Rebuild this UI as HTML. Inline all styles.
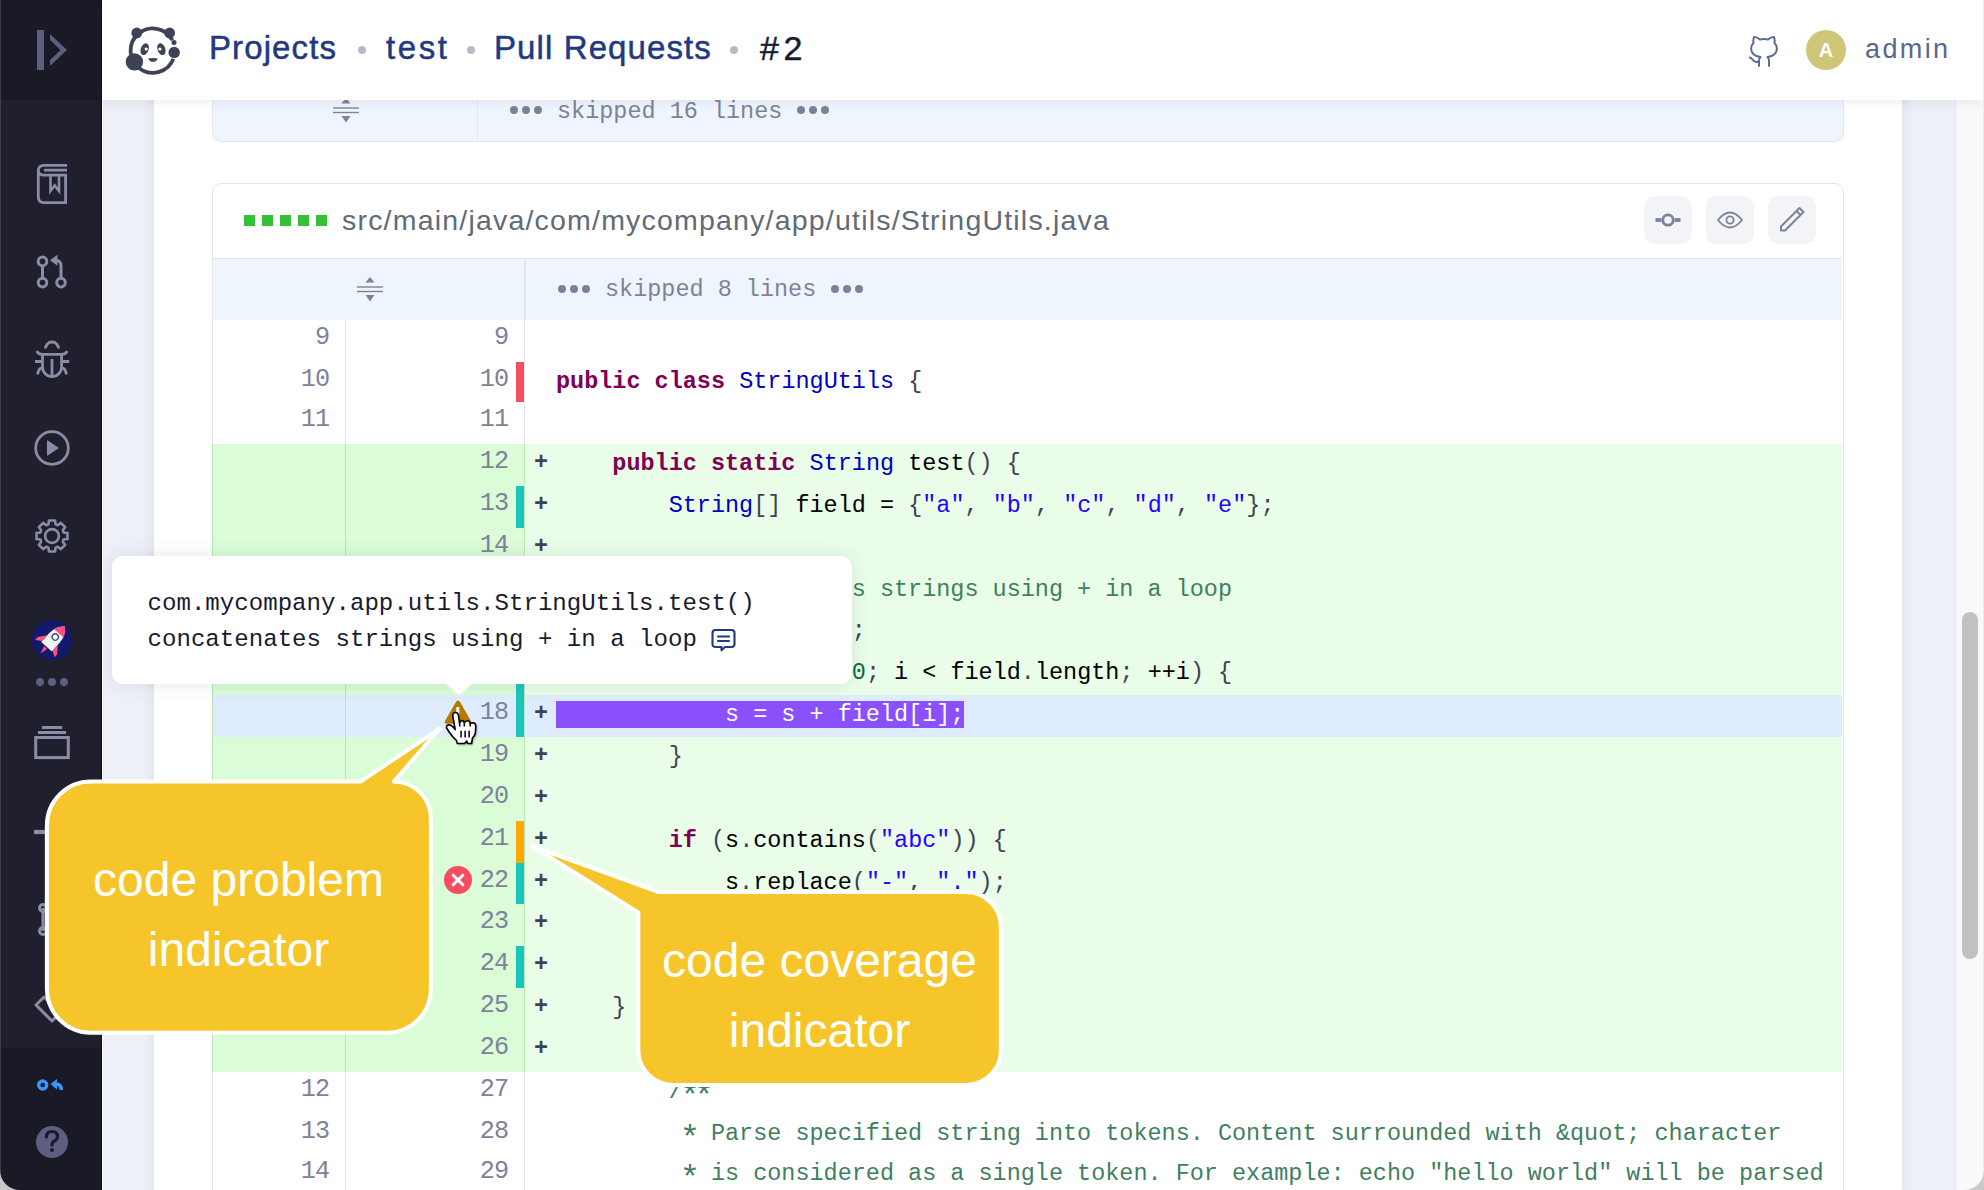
<!DOCTYPE html>
<html><head><meta charset="utf-8">
<style>
*{box-sizing:border-box;margin:0;padding:0}
html,body{width:1984px;height:1190px;overflow:hidden;background:#eef0f8;font-family:"Liberation Sans",sans-serif}
.abs{position:absolute}
#side{left:0;top:0;width:101px;height:1190px;background:#1f1f2d}
#sideTop{left:0;top:0;width:101px;height:100px;background:#1a1a27}
#sideBot{left:0;top:1048px;width:101px;height:142px;background:#1a1a27}
#sideLine{left:101px;top:0;width:1px;height:1190px;background:#0d0d18}
#sideWhite{left:102px;top:0;width:1px;height:1190px;background:#fff}
#card{left:154px;top:0;width:1748px;height:1190px;background:#fff;box-shadow:0 0 12px rgba(60,60,100,.12)}
#hdr{left:102px;top:0;width:1882px;height:100px;background:#fff;box-shadow:0 2px 10px rgba(60,70,110,.10);z-index:5}
#sb{left:1955px;top:100px;width:29px;height:1090px;background:#f9f9f9;border-left:1px solid #e8e8e8}
#thumb{left:1962px;top:612px;width:16px;height:347px;background:#c1c1c1;border-radius:8px}
.mono{font-family:"Liberation Mono",monospace;font-size:23.48px;white-space:pre}
.crumb{font-size:33px;color:#1f3a80;letter-spacing:1.1px;-webkit-text-stroke:0.5px #1f3a80;top:28px;line-height:40px}
.dot{width:8px;height:8px;border-radius:50%;background:#b9b9c9;top:46px}

.row{position:absolute;left:213px;width:1629px}
.rctx{background:#fff}
.radd{background:#e9fde8}
.rhl{background:#deecfd}
.radd::before,.rhl::before{content:"";position:absolute;left:-1.5px;top:0;width:1.5px;height:100%;background:#b9e3b9}
.lno{position:absolute;top:0;height:100%;font-family:"Liberation Mono",monospace;font-size:25.2px;letter-spacing:-1px;color:#7e8299;text-align:right;line-height:36px}
.lno.old{left:0;width:132px;padding-right:16px}
.lno.new{left:132px;width:179px;padding-right:16px;border-left:1px solid #e4e6ef}
.radd .lno,.rhl .lno{}
.radd .lno{background:#dafcd6;border-color:#b9e3b9}
.rhl .lno{border-color:#b9e3b9}
.bar{position:absolute;left:303px;top:0;width:8px;height:100%}
.bar.red{background:#f64e60}.bar.teal{background:#1bc5bd}.bar.orange{background:#ffa800}
.code{position:absolute;left:311px;top:0;height:100%;right:0;padding-left:31px;line-height:39px;color:#000;border-left:1px solid #e4e6ef}
.radd .code{border-color:#b9e3b9}
.rhl .code{border-color:#b9e3b9}
.code{text-indent:0}
.plus{position:absolute;left:321px;width:14px;top:0;font-family:"Liberation Mono",monospace;font-size:23.48px;font-weight:bold;color:#3f4254;line-height:37.5px;z-index:2}
.kw{color:#7f0055;font-weight:bold}.ty{color:#0000c0}.st{color:#2a00ff}.pu{color:#3f4254}.cm{color:#3f7f5f}.nu{color:#164}
.sel{background:#8950fc;color:#fff}
.ast{display:inline-block;transform:translateY(5.5px) scale(1.45)}

.box{position:absolute;border:1.5px solid #e4e6ef;background:#fff}
.skip{position:absolute;background:#eef5fd}
.dots3{position:absolute;width:8px;height:8px;border-radius:50%;background:#7e8299;box-shadow:12px 0 0 #7e8299,24px 0 0 #7e8299}
.skiptxt{position:absolute;font-family:"Liberation Mono",monospace;font-size:23.48px;color:#7e8299;white-space:pre;line-height:30px}
.hbtn{position:absolute;top:196px;width:48px;height:48px;border-radius:10px;background:#f3f4f8}
.gsq{position:absolute;top:215px;width:11px;height:11px;background:#35c134}

.callt{font-size:48px;line-height:70px;color:#fff;text-align:center;z-index:21;white-space:nowrap}
</style></head><body>
<div id="side" class="abs"></div>
<div id="sideTop" class="abs"></div>
<div id="sideBot" class="abs"></div>
<div id="sideLine" class="abs"></div>
<div id="sideWhite" class="abs"></div>
<div id="card" class="abs"></div>
<div id="sb" class="abs"></div>
<div id="thumb" class="abs"></div>


<!-- previous file box bottom -->
<div class="box" style="left:212px;top:60px;width:1632px;height:82px;border-radius:0 0 9px 9px;background:#eef5fd"></div>
<div class="abs" style="left:476.5px;top:60px;width:1.5px;height:80px;background:#e4e6ef"></div>
<svg class="abs" style="left:332px;top:96px" width="28" height="28" viewBox="0 0 28 28"><path d="M9.5 7.5 L14 2 L18.5 7.5Z M9.5 20 L14 26.5 L18.5 20Z" fill="#7e8299"/><rect x="1" y="11.3" width="26" height="1.4" fill="#7e8299"/><rect x="1" y="15.8" width="26" height="1.4" fill="#7e8299"/></svg>
<div class="dots3" style="left:510px;top:106px"></div>
<div class="skiptxt" style="left:557px;top:96.5px">skipped 16 lines</div>
<div class="dots3" style="left:797px;top:106px"></div>

<!-- file box -->
<div class="box" style="left:212px;top:182.5px;width:1632px;height:1100px;border-radius:9px 9px 0 0"></div>
<div class="abs" style="left:213px;top:257.5px;width:1629px;height:1.5px;background:#e4e6ef"></div>
<div class="gsq" style="left:244px"></div><div class="gsq" style="left:262px"></div><div class="gsq" style="left:280px"></div><div class="gsq" style="left:298px"></div><div class="gsq" style="left:316px"></div>
<div class="abs" style="left:342px;top:201.5px;font-size:28.5px;letter-spacing:1.2px;color:#626977;white-space:pre;line-height:36px">src/main/java/com/mycompany/app/utils/StringUtils.java</div>
<div class="hbtn" style="left:1644px"></div><div class="hbtn" style="left:1706px"></div><div class="hbtn" style="left:1768px"></div>
<svg class="abs" style="left:1644px;top:196px" width="48" height="48" viewBox="0 0 48 48"><circle cx="24" cy="24" r="5.2" fill="none" stroke="#7e8299" stroke-width="2.8"/><rect x="11.5" y="22.1" width="6" height="3.8" fill="#7e8299"/><rect x="30.5" y="22.1" width="6" height="3.8" fill="#7e8299"/></svg>
<svg class="abs" style="left:1706px;top:196px" width="48" height="48" viewBox="0 0 48 48"><path d="M12 24 Q24 9 36 24 Q24 39 12 24Z" fill="none" stroke="#7e8299" stroke-width="1.8"/><circle cx="24" cy="24" r="3.6" fill="none" stroke="#7e8299" stroke-width="1.8"/></svg>
<svg class="abs" style="left:1768px;top:196px" width="48" height="48" viewBox="0 0 48 48"><path d="M13 30.5 L31.5 12 L35.5 16 L17 34.5 L13 34.5Z M28.5 15 L32.5 19" fill="none" stroke="#7e8299" stroke-width="2" stroke-linejoin="round"/></svg>
<!-- skipped 8 -->
<div class="skip" style="left:213px;top:259px;width:1629px;height:61px"></div>
<div class="abs" style="left:524px;top:259px;width:1.5px;height:61px;background:#e4e6ef"></div>
<svg class="abs" style="left:356px;top:275px" width="28" height="28" viewBox="0 0 28 28"><path d="M9.5 7.5 L14 2 L18.5 7.5Z M9.5 20 L14 26.5 L18.5 20Z" fill="#7e8299"/><rect x="1" y="11.3" width="26" height="1.4" fill="#7e8299"/><rect x="1" y="15.8" width="26" height="1.4" fill="#7e8299"/></svg>
<div class="dots3" style="left:558px;top:285px"></div>
<div class="skiptxt" style="left:605px;top:274.5px">skipped 8 lines</div>
<div class="dots3" style="left:831px;top:285px"></div>

<svg class="abs" style="left:0;top:0;z-index:3" width="101" height="1190">
<g fill="#5e5e80"><rect x="37" y="30" width="7" height="40"/><path d="M50,34 L67,50 L50,66 L50,60 L60.5,50 L50,40Z"/></g>
<g fill="none" stroke="#8b8ca6" stroke-width="2.8">
 <path d="M67,165.4 H44 Q38.3,165.4 38.3,171 V197 Q38.3,202.6 44,202.6 H65.6 V175.1 H44 Q38.3,175.1 38.3,170.2 M44,170.2 H67"/>
 <path d="M50.5,175 V191 L54.7,185.5 L59,191 V175" stroke-width="2.6"/>
 <circle cx="42.5" cy="261.4" r="4.3" stroke-width="3"/><circle cx="42.5" cy="282.6" r="4.3" stroke-width="3"/><circle cx="61" cy="282.6" r="4.3" stroke-width="3"/>
 <path d="M42.5,265.7 V278.3 M61,278.3 V266 Q61,260.3 55,260.3" stroke-width="3"/><path d="M50,260.3 L57.5,254.8 V265.8Z" fill="#8b8ca6" stroke="none"/>
 <path d="M45.5,348.5 A6.5,6.5 0 0 1 58.5,348.5" stroke-width="2.8"/>
 <path d="M42.5,354.3 H61.6 V367 A9.55,9.55 0 0 1 42.5,367 Z M52,359 V375.5 M37,351 Q38,354.3 42.5,354.3 M67,351 Q66,354.3 61.6,354.3 M35,361.5 H42.5 M61.6,361.5 H69.2 M42.5,367 Q38,369 37.7,374.5 M61.6,367 Q66,369 66.3,374.5" stroke-width="2.8"/>
 <circle cx="52" cy="448" r="16.3" stroke-width="2.8"/>
 <circle cx="52" cy="536" r="6.9" stroke-width="2.6"/>
 <path d="M41.9,727.5 H62.2 M37.9,732.6 H66.1" stroke-width="3"/>
 <rect x="35.7" y="737.5" width="32.6" height="20.1" stroke-width="3"/>
 <path d="M34,832 H45" stroke-width="4.2"/>
 <path d="M43,908 V931" stroke-width="3"/><circle cx="43" cy="908" r="3.5" stroke-width="3"/><circle cx="43" cy="931" r="3.5" stroke-width="3"/>
 <path d="M36,1005 L44,997 L60,1013 L52,1021Z" stroke-width="3" stroke-linejoin="round"/>
</g>
<path d="M48.43,524.33 L48.99,520.49 L55.01,520.49 L55.57,524.33 L57.73,525.23 L60.84,522.90 L65.10,527.16 L62.77,530.27 L63.67,532.43 L67.51,532.99 L67.51,539.01 L63.67,539.57 L62.77,541.73 L65.10,544.84 L60.84,549.10 L57.73,546.77 L55.57,547.67 L55.01,551.51 L48.99,551.51 L48.43,547.67 L46.27,546.77 L43.16,549.10 L38.90,544.84 L41.23,541.73 L40.33,539.57 L36.49,539.01 L36.49,532.99 L40.33,532.43 L41.23,530.27 L38.90,527.16 L43.16,522.90 L46.27,525.23Z" fill="none" stroke="#8b8ca6" stroke-width="2.6" stroke-linejoin="round"/><path d="M47,440 L59,448 L47,456Z" fill="#8b8ca6"/>
<circle cx="52" cy="640" r="20" fill="#121a6e"/>
<g transform="translate(53.5 639) rotate(42) scale(1.3)">
 <path d="M0,-13 Q5.5,-8 5.5,-1 V8 H-5.5 V-1 Q-5.5,-8 0,-13Z" fill="#f2f2f4"/>
 <path d="M0,-13 Q4,-10 4.8,-6 H-4.8 Q-4,-10 0,-13Z" fill="#ff4f7b"/>
 <path d="M-5.5,1 L-10,7 L-10,10 L-5.5,7Z M5.5,1 L10,7 L10,10 L5.5,7Z M-1.6,9 H1.6 L0,15Z" fill="#ff4f7b"/>
 <circle cx="0" cy="-2" r="2.4" fill="#fff" stroke="#3b3f8c" stroke-width="1"/>
</g>
<g fill="#5f5f80"><circle cx="40" cy="682" r="4"/><circle cx="52" cy="682" r="4"/><circle cx="64" cy="682" r="4"/></g>
<g fill="none" stroke="#3699ff"><circle cx="42.7" cy="1085" r="4" stroke-width="3.3"/></g>
<path d="M50.5,1084 L57,1079 V1082.5 Q63,1082.5 63,1090 H59.5 Q59.5,1086.5 57,1086 V1089.5Z" fill="#3699ff"/>
<circle cx="52" cy="1142" r="16" fill="#5e5e80"/>
<path d="M46.5,1137 Q46.5,1131.5 52,1131.5 Q57.5,1131.5 57.5,1136.5 Q57.5,1139.5 54.5,1141 Q52,1142.3 52,1145" fill="none" stroke="#1b1a27" stroke-width="3.2" stroke-linecap="round"/>
<circle cx="52" cy="1150" r="2" fill="#1b1a27"/>
</svg>
<!-- logo -->
<svg class="abs" style="left:120px;top:20px;z-index:6" width="65" height="60" viewBox="120 20 65 60">
<g fill="#3f4254">
<path d="M172.4,40.2 A22.2,22.2 0 1 0 173.4,58.9" fill="none" stroke="#3f4254" stroke-width="3.8"/>
<circle cx="136.8" cy="33" r="5.4"/><circle cx="169.6" cy="33" r="5.4"/>
<circle cx="134.4" cy="61.9" r="8.7"/><circle cx="174.2" cy="52.5" r="5.7"/><circle cx="174" cy="42.4" r="2.5"/>
<ellipse cx="144.7" cy="49.2" rx="3.9" ry="6.1" transform="rotate(20 144.7 49.2)"/>
<ellipse cx="161.4" cy="49.2" rx="3.9" ry="6.1" transform="rotate(-20 161.4 49.2)"/>
<path d="M148.2,58.4 Q153,57.4 157.8,58.4 Q156.5,61.8 153,61.8 Q149.5,61.8 148.2,58.4Z"/>
</g>
<circle cx="146.2" cy="49" r="1.6" fill="#fff"/><circle cx="159.9" cy="49" r="1.6" fill="#fff"/>
</svg>
<!-- github -->
<svg class="abs" style="left:1745px;top:32px;z-index:6" width="38" height="38" viewBox="0 0 38 38"><path d="M14,34 V28.5 Q14,26.5 15.5,25 Q8,24 6.5,19 Q5.2,14.5 8.5,11 Q7.8,8 9,5 Q12,5 15,7.5 Q19,6.5 23,7.5 Q26,5 29,5 Q30.2,8 29.5,11 Q32.8,14.5 31.5,19 Q30,24 22.5,25 Q24,26.5 24,28.5 V34 M14,29.5 Q9.5,31 7.5,27.5 Q6.5,26 4.8,25.5" fill="none" stroke="#5e6b94" stroke-width="2" stroke-linecap="round" stroke-linejoin="round"/></svg>
<div class="row rctx" style="top:320.00px;height:42.00px">
<div class="lno old">9</div><div class="lno new">9</div>
<div class="code mono"></div>
</div>
<div class="row rctx" style="top:362.00px;height:40.00px">
<div class="lno old">10</div><div class="lno new">10</div>
<div class="bar red"></div>
<div class="code mono"><b class="kw">public</b> <b class="kw">class</b> <span class="ty">StringUtils</span> <span class="pu">{</span></div>
</div>
<div class="row rctx" style="top:402.00px;height:42.00px">
<div class="lno old">11</div><div class="lno new">11</div>
<div class="code mono"></div>
</div>
<div class="row radd" style="top:444.00px;height:41.86px">
<div class="lno old"></div><div class="lno new">12</div>
<div class="plus">+</div>
<div class="code mono">    <b class="kw">public</b> <b class="kw">static</b> <span class="ty">String</span> test<span class="pu">()</span> <span class="pu">{</span></div>
</div>
<div class="row radd" style="top:485.86px;height:41.86px">
<div class="lno old"></div><div class="lno new">13</div>
<div class="bar teal"></div>
<div class="plus">+</div>
<div class="code mono">        <span class="ty">String</span><span class="pu">[]</span> field = <span class="pu">{</span><span class="st">"a"</span><span class="pu">,</span> <span class="st">"b"</span><span class="pu">,</span> <span class="st">"c"</span><span class="pu">,</span> <span class="st">"d"</span><span class="pu">,</span> <span class="st">"e"</span><span class="pu">};</span></div>
</div>
<div class="row radd" style="top:527.72px;height:41.86px">
<div class="lno old"></div><div class="lno new">14</div>
<div class="plus">+</div>
<div class="code mono"></div>
</div>
<div class="row radd" style="top:569.58px;height:41.86px">
<div class="lno old"></div><div class="lno new">15</div>
<div class="plus">+</div>
<div class="code mono">        <span class="cm">//concatenates strings using + in a loop</span></div>
</div>
<div class="row radd" style="top:611.44px;height:41.86px">
<div class="lno old"></div><div class="lno new">16</div>
<div class="bar teal"></div>
<div class="plus">+</div>
<div class="code mono">        <span class="ty">String</span> s = <span class="st">""</span><span class="pu">;</span></div>
</div>
<div class="row radd" style="top:653.30px;height:41.86px">
<div class="lno old"></div><div class="lno new">17</div>
<div class="bar teal"></div>
<div class="plus">+</div>
<div class="code mono">        <b class="kw">for</b> <span class="pu">(</span><b class="kw">int</b> i = <span class="nu">0</span><span class="pu">;</span> i &lt; field<span class="pu">.</span>length<span class="pu">;</span> ++i<span class="pu">)</span> <span class="pu">{</span></div>
</div>
<div class="row rhl" style="top:695.16px;height:41.86px">
<div class="lno old"></div><div class="lno new">18</div>
<div class="bar teal"></div>
<div class="plus">+</div>
<div class="code mono"><span class="sel">            s = s + field[i];</span></div>
</div>
<div class="row radd" style="top:737.02px;height:41.86px">
<div class="lno old"></div><div class="lno new">19</div>
<div class="plus">+</div>
<div class="code mono">        <span class="pu">}</span></div>
</div>
<div class="row radd" style="top:778.88px;height:41.86px">
<div class="lno old"></div><div class="lno new">20</div>
<div class="plus">+</div>
<div class="code mono"></div>
</div>
<div class="row radd" style="top:820.74px;height:41.86px">
<div class="lno old"></div><div class="lno new">21</div>
<div class="bar orange"></div>
<div class="plus">+</div>
<div class="code mono">        <b class="kw">if</b> <span class="pu">(</span>s<span class="pu">.</span>contains<span class="pu">(</span><span class="st">"abc"</span><span class="pu">))</span> <span class="pu">{</span></div>
</div>
<div class="row radd" style="top:862.60px;height:41.86px">
<div class="lno old"></div><div class="lno new">22</div>
<div class="bar teal"></div>
<div class="plus">+</div>
<div class="code mono">            s<span class="pu">.</span>replace<span class="pu">(</span><span class="st">"-"</span><span class="pu">,</span> <span class="st">"."</span><span class="pu">);</span></div>
</div>
<div class="row radd" style="top:904.46px;height:41.86px">
<div class="lno old"></div><div class="lno new">23</div>
<div class="plus">+</div>
<div class="code mono">        <span class="pu">}</span></div>
</div>
<div class="row radd" style="top:946.32px;height:41.86px">
<div class="lno old"></div><div class="lno new">24</div>
<div class="bar teal"></div>
<div class="plus">+</div>
<div class="code mono">        <b class="kw">return</b> s<span class="pu">;</span></div>
</div>
<div class="row radd" style="top:988.18px;height:41.86px">
<div class="lno old"></div><div class="lno new">25</div>
<div class="plus">+</div>
<div class="code mono">    <span class="pu">}</span></div>
</div>
<div class="row radd" style="top:1030.04px;height:41.86px">
<div class="lno old"></div><div class="lno new">26</div>
<div class="plus">+</div>
<div class="code mono"></div>
</div>
<div class="row rctx" style="top:1071.90px;height:41.86px">
<div class="lno old">12</div><div class="lno new">27</div>
<div class="code mono">        <span class="cm">/<span class="ast">*</span><span class="ast">*</span></span></div>
</div>
<div class="row rctx" style="top:1113.76px;height:41.86px">
<div class="lno old">13</div><div class="lno new">28</div>
<div class="code mono">         <span class="cm"><span class="ast">*</span> Parse specified string into tokens. Content surrounded with &amp;quot; character</span></div>
</div>
<div class="row rctx" style="top:1153.70px;height:41.86px">
<div class="lno old">14</div><div class="lno new">29</div>
<div class="code mono">         <span class="cm"><span class="ast">*</span> is considered as a single token. For example: echo "hello world" will be parsed</span></div>
</div>


<!-- problem icons -->
<svg class="abs" style="left:0;top:0;z-index:4" width="1984" height="1190">
<path d="M457.9,700.5 Q459.2,700.5 460.2,702.3 L471,721 Q472,723.7 469.5,723.7 L446.5,723.7 Q443.8,723.7 445,721 L455.8,702.3 Q456.7,700.5 457.9,700.5Z" fill="#b87800"/>
<rect x="456.3" y="707" width="3" height="9" fill="#fff"/><rect x="456.3" y="718" width="3" height="3" fill="#fff"/>
<circle cx="458" cy="880" r="14" fill="#f64e60"/>
<path d="M453.2,875.2 L462.8,884.8 M462.8,875.2 L453.2,884.8" stroke="#fff" stroke-width="3" stroke-linecap="round"/>
</svg>
<svg class="abs" style="left:0;top:0;z-index:8" width="1984" height="1190">
<defs><filter id="csh" x="-50%" y="-50%" width="200%" height="200%"><feGaussianBlur stdDeviation="0.8"/></filter></defs>
<path d="M455.5,712.5 Q458.2,712.5 458.5,715.5 L459.5,723.2 Q460.5,720.6 462,720.6 Q464,720.6 464.3,723 Q465.3,720.8 467.6,720.8 Q469.6,720.8 470.2,723.6 Q471.3,722.8 473,722.8 Q475.8,723 475.8,726 L475.5,732.5 Q475,735.5 472.5,738 L471.6,743.5 L467.5,743.5 L466.8,741 L464.5,743.5 L457.3,743.5 L456.5,740.5 Q452,736.5 448.5,731 L446.6,728 Q446,725.4 448.6,724.9 Q451,724.6 453.5,727.5 L455.2,729.6 L452.8,716 Q452.6,712.5 455.5,712.5Z" fill="#000" opacity=".35" transform="translate(1,1.5)" filter="url(#csh)"/>
<path d="M455.5,712.5 Q458.2,712.5 458.5,715.5 L459.5,723.2 Q460.5,720.6 462,720.6 Q464,720.6 464.3,723 Q465.3,720.8 467.6,720.8 Q469.6,720.8 470.2,723.6 Q471.3,722.8 473,722.8 Q475.8,723 475.8,726 L475.5,732.5 Q475,735.5 472.5,738 L471.6,743.5 L467.5,743.5 L466.8,741 L464.5,743.5 L457.3,743.5 L456.5,740.5 Q452,736.5 448.5,731 L446.6,728 Q446,725.4 448.6,724.9 Q451,724.6 453.5,727.5 L455.2,729.6 L452.8,716 Q452.6,712.5 455.5,712.5Z" fill="#fff" stroke="#000" stroke-width="1.6" stroke-linejoin="round"/>
<path d="M461.1,730.8 V737.4 M465.1,730.8 V737.4 M469.1,730.8 V737.4 M459.5,723.5 L459.9,726.5 M464.3,723.2 V726.5 M470.2,723.8 V726.5" stroke="#000" stroke-width="1.5"/>
</svg>
<!-- tooltip -->
<div class="abs" style="left:112px;top:556px;width:740px;height:128px;background:#fff;border-radius:11px;box-shadow:0 0 18px rgba(60,70,110,.13);z-index:10"></div>
<svg class="abs" style="left:0;top:0;z-index:11" width="1984" height="1190"><path d="M444,682 L459,695.5 L474,682Z" fill="#fff"/></svg>
<div class="abs mono" style="left:147.5px;top:586px;font-size:24.1px;line-height:36px;color:#181c32;z-index:12">com.mycompany.app.utils.StringUtils.test()
concatenates strings using + in a loop</div>
<svg class="abs" style="left:710px;top:626px;z-index:12" width="28" height="28" viewBox="0 0 28 28"><path d="M4.5,4 H21.5 Q24.5,4 24.5,7 V18 Q24.5,21 21.5,21 H15 L11.5,24.3 L11.5,21 H5.5 Q2.5,21 2.5,18 V7 Q2.5,4 5.5,4Z" fill="none" stroke="#1f3a82" stroke-width="2.1" stroke-linejoin="round"/><path d="M8,10.5 H19 M8,15 H19" stroke="#1f3a82" stroke-width="2.1" stroke-linecap="round"/></svg>
<!-- callouts -->
<svg class="abs" style="left:0;top:0;z-index:20" width="1984" height="1190">
<path d="M90.9,781.5 L360.5,781.5 L440,728.5 L393.8,781.5 A37.10,37.10 0 0 1 430.9,818.60 L430.9,988.80 A44,44 0 0 1 386.90,1032.8 L90.90,1032.8 A44,44 0 0 1 46.9,988.80 L46.9,825.50 A44,44 0 0 1 90.90,781.5 Z" fill="#f6c52a" stroke="#fff" stroke-width="4.1" stroke-linejoin="round"/>
<path d="M658.7,892 L965.90,892 A35,35 0 0 1 1000.9,927 L1000.9,1050 A35,35 0 0 1 965.90,1085 L673.30,1085 A35,35 0 0 1 638.3,1050 L638.3,912.5 L532,846 Z" fill="#f6c52a" stroke="#fff" stroke-width="4.1" stroke-linejoin="round"/>
</svg>
<div class="abs callt" style="left:45px;width:387px;top:845px">code problem<br>indicator</div>
<div class="abs callt" style="left:638px;width:363px;top:925.5px">code coverage<br>indicator</div>
<!-- header -->
<div id="hdr" class="abs"></div>
<div class="abs crumb" style="left:209px;z-index:6">Projects</div>
<div class="abs dot" style="left:358px;z-index:6"></div>
<div class="abs crumb" style="left:386px;z-index:6;letter-spacing:2.6px">test</div>
<div class="abs dot" style="left:467px;z-index:6"></div>
<div class="abs crumb" style="left:494px;z-index:6">Pull Requests</div>
<div class="abs dot" style="left:730px;z-index:6"></div>
<div class="abs crumb" style="left:760px;z-index:6;color:#181c32;-webkit-text-stroke:0.5px #181c32;letter-spacing:4.5px;font-size:34px;top:27.5px">#2</div>
<div class="abs" style="left:1806px;top:30px;width:40px;height:40px;border-radius:50%;background:#cfc777;z-index:6;color:#fff;font-weight:bold;font-size:20px;line-height:40px;text-align:center">A</div>
<div class="abs" style="left:1865px;top:29px;font-size:27px;letter-spacing:2.4px;color:#5b6690;line-height:40px;z-index:6">admin</div>


<!-- window frame -->
<div class="abs" style="left:0;top:0;width:1.3px;height:1190px;background:#3c3c4a;z-index:30"></div>
<div class="abs" style="left:1982.5px;top:0;width:1.5px;height:1190px;background:#ececec;z-index:30"></div>
<svg class="abs" style="left:0;top:0;z-index:31" width="1984" height="1190">
<path d="M0,1170 A20,20 0 0 0 20,1190 L0,1190Z" fill="#c9c9c9"/>
<path d="M1984,1170 A20,20 0 0 1 1964,1190 L1984,1190Z" fill="#c9c9c9"/>
</svg>
</body></html>
